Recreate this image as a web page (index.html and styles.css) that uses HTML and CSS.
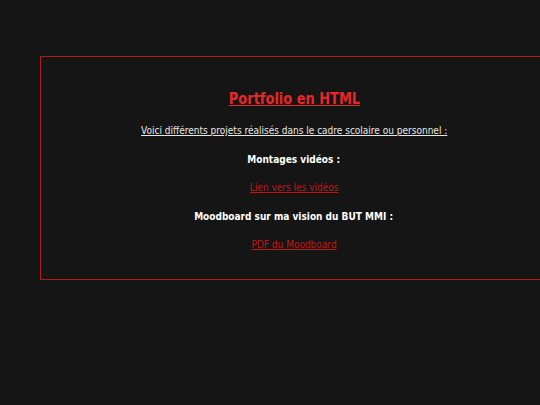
FILE: index.html
```html
<!DOCTYPE html>
<html lang="fr">
<head>
<meta charset="utf-8">
<title>Portfolio en HTML</title>
<link rel="stylesheet" href="styles.css">
</head>
<body>
<main class="box">
  <h1 class="title"><a class="cond cond-title" href="#">Portfolio en HTML</a></h1>
  <p class="intro"><u class="cond">Voici différents projets réalisés dans le cadre scolaire ou personnel :</u></p>
  <p class="label"><span class="cond">Montages vidéos :</span></p>
  <p class="link"><a class="cond" href="#">Lien vers les vidéos</a></p>
  <p class="label"><span class="cond">Moodboard sur ma vision du BUT MMI :</span></p>
  <p class="link"><a class="cond" href="#">PDF du Moodboard</a></p>
</main>
</body>
</html>
```
FILE: styles.css
```css
html, body {
  margin: 0;
  padding: 0;
  background: #151515;
  overflow: hidden;
}
body {
  font-family: "DejaVu Sans", sans-serif;
  color: #ffffff;
  font-size: 11px;
}
.cond {
  display: inline-block;
  transform: scaleX(0.818);
  transform-origin: center;
  white-space: nowrap;
}
.cond-title {
  transform: scaleX(0.836);
}
.box {
  margin: 56px 0 0 40px;
  width: 506px;
  border: 1px solid #b21b1b;
  padding: 32px 0 19px;
  text-align: center;
  display: flex;
  flex-direction: column;
}
.title {
  margin: 0 0 8px;
  font-size: 15.5px;
  line-height: 20px;
  font-weight: bold;
}
.title a {
  color: #e62828;
  text-decoration: underline;
}
p {
  margin: 0;
  line-height: 28.5px;
}
.intro {
  color: #e6e6e6;
}
.label {
  font-weight: bold;
}
.link a {
  color: #c41414;
  text-decoration: underline;
}
```
